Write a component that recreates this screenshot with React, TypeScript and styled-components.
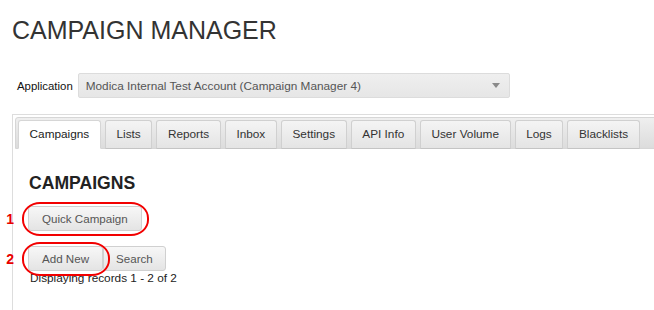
import React from 'react';
import styled, { createGlobalStyle } from 'styled-components';

const GlobalStyle = createGlobalStyle`
  html, body {
    margin: 0;
    padding: 0;
    background: #fff;
    overflow: hidden;
  }
  body {
    font-family: "Liberation Sans", Arial, Helvetica, sans-serif;
  }
`;

const Page = styled.div`
  padding-left: 12px;
  width: 660px;
`;

const Title = styled.h1`
  margin: 15px 0 0;
  font-size: 25px;
  line-height: 30px;
  font-weight: normal;
  color: #333;
`;

const AppRow = styled.div`
  display: flex;
  align-items: center;
  gap: 5px;
  margin: 28px 0 0 5px;
`;

const Label = styled.span`
  font-size: 11.4px;
  color: #111;
`;

const SelectBox = styled.div`
  display: flex;
  align-items: center;
  justify-content: space-between;
  box-sizing: border-box;
  width: 432px;
  height: 25px;
  padding: 0 9px 0 7px;
  border: 1px solid #dcdcdc;
  border-radius: 2px;
  background: linear-gradient(#efefef, #e6e6e6);
  font-size: 11.8px;
  color: #555;
`;

const Caret = styled.span`
  width: 0;
  height: 0;
  border-left: 4px solid transparent;
  border-right: 4px solid transparent;
  border-top: 5px solid #8a8a8a;
`;

const Panel = styled.div`
  margin-top: 16px;
  border-top: 1px solid #dddddd;
  border-left: 1px solid #dddddd;
  padding: 2px 0 0 2px;
  height: 200px;
`;

const TabStrip = styled.ul`
  display: flex;
  align-items: flex-end;
  gap: 4px;
  list-style: none;
  margin: 0;
  padding: 2px 2px 0;
  border: 1px solid #d6d6d6;
  border-radius: 3px 0 0 0;
  background: linear-gradient(#efefef, #dcdcdc);
  height: 28px;
`;

const Tab = styled.li<{ $active?: boolean }>`
  box-sizing: border-box;
  height: 29px;
  margin-bottom: -1px;
  padding: 0 10.6px;
  line-height: 27px;
  font-size: 11.8px;
  color: ${({ $active }) => ($active ? '#222' : '#333')};
  border: 1px solid ${({ $active }) => ($active ? '#d6d6d6' : '#d0d0d0')};
  border-bottom-color: ${({ $active }) => ($active ? '#fff' : '#c4c4c4')};
  border-radius: 3px 3px 0 0;
  background: ${({ $active }) =>
    $active ? '#fff' : 'linear-gradient(#f4f4f4, #e4e4e4)'};
  white-space: nowrap;
`;

const Content = styled.div`
  padding: 24px 13px 0;
`;

const Heading = styled.h2`
  margin: 0 0 0 1px;
  font-size: 17.6px;
  line-height: 20px;
  font-weight: bold;
  color: #222;
`;

const ButtonRow = styled.div<{ $top: number }>`
  display: flex;
  margin-top: ${({ $top }) => $top}px;
`;

const Marked = styled.div`
  position: relative;
  display: flex;
`;

const Ring = styled.span`
  position: absolute;
  top: -4px;
  left: -6px;
  right: -7px;
  bottom: -5px;
  border: 2px solid #f20000;
  border-radius: 18px / 16px;
  pointer-events: none;
`;

const Step = styled.span`
  position: absolute;
  right: calc(100% + 14px);
  top: 50%;
  transform: translateY(-50%);
  font-size: 14px;
  line-height: 14px;
  font-weight: bold;
  color: #e80000;
`;

const Button = styled.button`
  box-sizing: border-box;
  height: 25px;
  padding: 0 13px;
  border: 1px solid #d0d0d0;
  border-radius: 3px;
  background: linear-gradient(#f7f7f7, #e4e4e4);
  font-family: "Liberation Sans", Arial, sans-serif;
  font-size: 11.6px;
  color: #555;
`;

const SearchButton = styled(Button)`
  padding: 0 12px;
`;

const Records = styled.div`
  margin-left: 2px;
  font-size: 11.8px;
  line-height: 14px;
  color: #222;
`;

const tabs = [
  'Campaigns',
  'Lists',
  'Reports',
  'Inbox',
  'Settings',
  'API Info',
  'User Volume',
  'Logs',
  'Blacklists',
];

export default function App() {
  return (
    <Page>
      <GlobalStyle />
      <Title>CAMPAIGN MANAGER</Title>
      <AppRow>
        <Label>Application</Label>
        <SelectBox>
          <span>Modica Internal Test Account (Campaign Manager 4)</span>
          <Caret />
        </SelectBox>
      </AppRow>
      <Panel>
        <TabStrip>
          {tabs.map((t, i) => (
            <Tab key={t} $active={i === 0}>
              {t}
            </Tab>
          ))}
        </TabStrip>
        <Content>
          <Heading>CAMPAIGNS</Heading>
          <ButtonRow $top={13}>
            <Marked>
              <Step>1</Step>
              <Button>Quick Campaign</Button>
              <Ring />
            </Marked>
          </ButtonRow>
          <ButtonRow $top={15}>
            <Marked>
              <Step>2</Step>
              <Button>Add New</Button>
              <Ring />
            </Marked>
            <SearchButton>Search</SearchButton>
          </ButtonRow>
          <Records>Displaying records 1 - 2 of 2</Records>
        </Content>
      </Panel>
    </Page>
  );
}
